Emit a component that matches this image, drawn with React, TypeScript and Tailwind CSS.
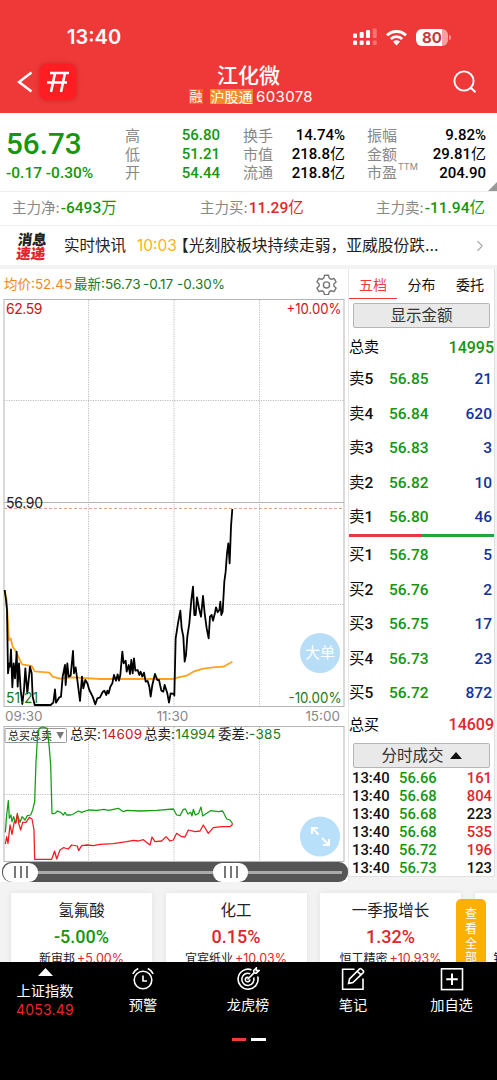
import { type ReactNode } from "react";
import { ChevronRight } from "lucide-react";
import clsx from "clsx";

const DIN = "font-['Roboto','Noto_Sans_CJK_SC',sans-serif] font-medium";
const GREEN = "text-[#16960e]";
const RED = "text-[#e0262b]";

const priceLine =
  "14,270 18,300 21,330 24,520 28,490 30,500 33,448 37,562 41,490 45,535 50,455 53,560 57,490 62,570 67,612 72,570 76,505 82,580 90,500 95,520 98,590 104,615 152,615 160,608 165,568 168,608 178,592 183,590 188,530 195,495 197,555 202,490 206,530 212,527 219,453 222,520 227,502 232,540 240,603 246,530 250,565 256,540 262,550 268,570 278,590 286,613 292,595 300,592 308,576 313,572 319,585 322,572 326,580 331,560 337,550 342,525 348,542 353,523 357,542 361,525 367,455 371,490 377,482 380,515 386,495 390,522 394,480 398,520 402,475 406,512 413,510 418,525 422,515 427,530 432,518 437,545 443,543 448,560 452,590 457,555 465,522 472,540 477,540 484,572 490,575 494,555 502,580 507,608 512,580 522,582 523,587 527,415 534,370 541,332 545,385 550,410 554,485 558,465 562,410 568,370 574,300 579,260 583,345 587,345 591,292 597,325 603,350 609,288 614,340 620,385 626,415 630,350 635,345 639,362 645,338 648,322 653,337 658,330 661,305 664,345 668,335 673,245 677,215 681,160 685,130 689,190 693,80 697,27";
const avgLine =
  "14,272 20,300 27,420 32,415 38,440 45,450 55,470 66,493 95,498 104,514 148,518 158,530 180,536 220,532 300,537 520,537 535,532 560,527 580,515 610,506 640,502 670,500 697,485";
const sellLine =
  "16,352 20,300 25,257 28,310 33,300 36,320 41,305 47,325 52,300 60,322 66,305 75,315 82,302 92,300 98,285 104,260 108,140 113,60 118,40 128,36 142,40 148,100 152,150 156,296 165,295 172,288 182,292 190,300 195,292 200,300 212,300 220,297 235,288 245,292 265,285 290,286 312,283 325,286 355,280 370,290 380,286 420,288 470,286 520,282 530,300 540,302 550,283 556,282 564,297 572,292 576,303 580,283 586,300 596,295 603,276 608,303 620,295 632,287 655,290 668,288 680,312 690,315 698,327";
const buyLine =
  "16,387 20,365 24,385 30,330 36,358 43,320 48,322 52,295 56,325 62,345 68,322 78,322 88,307 96,312 102,345 104,433 155,433 164,408 170,432 180,405 190,398 205,402 215,390 232,393 236,407 245,392 262,390 280,392 300,388 340,386 380,380 400,376 415,378 430,374 450,390 456,366 465,380 485,378 498,365 510,378 520,375 530,355 545,365 555,366 565,345 585,350 600,348 610,330 625,355 640,338 665,335 690,335 698,328";

const sells = [
  ["卖5", "56.85", "21"],
  ["卖4", "56.84", "620"],
  ["卖3", "56.83", "3"],
  ["卖2", "56.82", "10"],
  ["卖1", "56.80", "46"],
];
const buys = [
  ["买1", "56.78", "5"],
  ["买2", "56.76", "2"],
  ["买3", "56.75", "17"],
  ["买4", "56.73", "23"],
  ["买5", "56.72", "872"],
];
const trades = [
  { price: "56.66", qty: "161", up: true },
  { price: "56.68", qty: "804", up: true },
  { price: "56.68", qty: "223", up: false },
  { price: "56.68", qty: "535", up: true },
  { price: "56.72", qty: "196", up: true },
  { price: "56.73", qty: "123", up: false },
];
const sectors = [
  { name: "氢氟酸", pct: "-5.00%", up: false, stock: "新审邦", chg: "+5.00%" },
  { name: "化工", pct: "0.15%", up: true, stock: "宜宾纸业", chg: "+10.03%" },
  { name: "一季报增长", pct: "1.32%", up: true, stock: "恒工精密", chg: "+10.93%" },
];

function Header() {
  return (
    <header className="h-[113px] bg-[#ef3939] text-white">
      <div className="flex h-[58px] items-end justify-between pr-[46px] pb-[10px] pl-[67px]">
        <span className="text-[20px] leading-[22px] font-semibold">13:40</span>
        <div className="flex h-[22px] items-center">
          <svg width="26" height="18" viewBox="0 0 26 18" fill="#fff">
            <rect x="1" y="5.5" width="4" height="4.500" rx="1" />
            <rect x="7.7" y="4" width="4" height="6" rx="1" />
            <rect x="14" y="2" width="4" height="8" rx="1" />
            <rect x="20.7" y="0.5" width="4" height="9.5" rx="1" opacity=".3" />
            <rect x="1" y="12.5" width="4" height="4.5" rx="1.2" />
            <rect x="7.7" y="12.5" width="4" height="4.5" rx="1.2" />
            <rect x="14" y="12.5" width="4" height="4.5" rx="1.2" />
            <rect x="20.7" y="12.5" width="4" height="4.5" rx="1.2" opacity=".3" />
          </svg>
          <svg className="ml-[7px]" width="23" height="17" viewBox="0 0 23 17">
            <path d="M2 6.3a13.5 13.5 0 0 1 19 0" fill="none" stroke="#fff" strokeWidth="3" />
            <path d="M5.8 10a8 8 0 0 1 11.4 0" fill="none" stroke="#fff" strokeWidth="2.8" />
            <path d="M8 12.8a5 5 0 0 1 7 0L11.5 16.5Z" fill="#fff" />
          </svg>
          <div className="ml-[8px] flex h-[17px] w-[32px] items-center justify-center rounded-[6px] bg-[linear-gradient(90deg,#fff_80%,#f7a0a0_80%)] text-[15px] leading-[17px] font-bold text-[#c43a3a]">
            80
          </div>
          <span className="ml-[1px] h-[5px] w-[2px] rounded-r-full bg-[#f7a0a0]" />
        </div>
      </div>
      <div className="flex h-[55px] items-start justify-between">
        <div className="flex w-[150px] items-center pt-[6px] pl-[17px]">
          <svg width="16" height="22" viewBox="0 0 16 22" fill="none" stroke="#fff" strokeWidth="2.6">
            <path d="M14.5 1.5 2 11l12.5 9.5" />
          </svg>
          <span className="ml-[7px] flex h-[36px] w-[36px] items-center justify-center rounded-[7px] bg-[#fd1d22] shadow-[0_0_5px_rgba(150,0,0,.45)]">
            <svg width="26" height="22" viewBox="0 0 26 22" fill="none" stroke="#fff" strokeWidth="2.6">
              <path d="M5 2H24M2 11.5H22M10 2 6 21M20 2 16 21" />
            </svg>
          </span>
        </div>
        <div className="flex flex-col items-center pt-[5px]">
          <span className="text-[21px] leading-[25px] font-medium">江化微</span>
          <div className="mt-[1px] ml-[5px] flex items-center text-[14px] leading-[15px]">
            <span className="w-[14px] bg-[#f9600f] text-center text-[13px]">融</span>
            <span className="ml-[7px] bg-[#f48a2e] px-[.5px]">沪股通</span>
            <span className="ml-[3px] text-[15px] tracking-[.35px]">603078</span>
          </div>
        </div>
        <div className="flex w-[150px] justify-end pt-[12px] pr-[20px]">
          <svg width="24" height="24" viewBox="0 0 24 24" fill="none" stroke="#fff" strokeWidth="1.9">
            <circle cx="11" cy="11" r="9.6" />
            <path d="m17.8 17.8 4.7 4.4" />
          </svg>
        </div>
      </div>
    </header>
  );
}

// the 亿 / 万 unit is drawn lighter than the digits
function Amount({ value }: { value: string }) {
  const unit = value.match(/[亿万]$/)?.[0];
  if (!unit) return <>{value}</>;
  return (
    <>
      {value.slice(0, -1)}
      <span className="font-normal">{unit}</span>
    </>
  );
}

function StatRow({ label, value, className }: { label: ReactNode; value: string; className?: string }) {
  return (
    <div className="flex h-[18.7px] items-center justify-between">
      <span className="text-[15px] whitespace-nowrap text-[#888]">{label}</span>
      <span className={clsx(DIN, "pt-[1px] text-[15px] whitespace-nowrap", className)}>
        <Amount value={value} />
      </span>
    </div>
  );
}

function Quote() {
  return (
    <section className="relative flex h-[79px] border-b border-[#eee] bg-white pt-[13px] leading-none">
      <div className={clsx("w-[125px] pl-[6px]", DIN, GREEN)}>
        <div className="pt-[2px] text-[29.700px] leading-[32px]">56.73</div>
        <div className="mt-[5px] text-[15.500px] leading-[16px] whitespace-nowrap">-0.17 -0.30%</div>
      </div>
      <div className="w-[95px]">
        <StatRow label="高" value="56.80" className={GREEN} />
        <StatRow label="低" value="51.21" className={GREEN} />
        <StatRow label="开" value="54.44" className={GREEN} />
      </div>
      <div className="ml-[23px] w-[102px]">
        <StatRow label="换手" value="14.74%" />
        <StatRow label="市值" value="218.8亿" />
        <StatRow label="流通" value="218.8亿" />
      </div>
      <div className="ml-[22px] w-[119px]">
        <StatRow label="振幅" value="9.82%" />
        <StatRow label="金额" value="29.81亿" />
        <StatRow
          label={
            <span className="flex">
              市盈<span className="-mt-[3px] ml-[1px] text-[9px]">TTM</span>
            </span>
          }
          value="204.90"
        />
      </div>
      <span className="absolute right-0 bottom-0 h-[9px] w-[9px] bg-[#999] [clip-path:polygon(100%_0,100%_100%,0_100%)]" />
    </section>
  );
}

function MainForce({ label, value, className }: { label: string; value: string; className: string }) {
  return (
    <div className="flex items-center">
      <span className="text-[14.5px] text-[#888]">{label}:</span>
      <span className={clsx(DIN, "ml-[1px] text-[15.5px] whitespace-nowrap", className)}>
        <Amount value={value} />
      </span>
    </div>
  );
}

function News() {
  return (
    <section className="flex h-[39px] items-center bg-white pt-[1px] pl-[17px] text-[15.5px] leading-none whitespace-nowrap text-[#222]">
      <div className="w-[47px] -skew-x-6 text-[14.500px] leading-[13.5px] font-black">
        <div className="text-[#222]">消息</div>
        <div className={RED}>速递</div>
      </div>
      <span>实时快讯</span>
      <span className="ml-[11px] w-[36px] text-[15.5px] text-[#fbb414]">10:03</span>
      <span className="text-[15.750px]">【光刻胶板块持续走弱，亚威股份跌...</span>
      <ChevronRight className="mr-[8px] ml-auto h-[18px] w-[18px] shrink-0 text-[#aaa]" strokeWidth={1.5} />
    </section>
  );
}

function Grid({ height, mid }: { height: number; mid: number[] }) {
  return (
    <g fill="none" stroke="#bdbdbd" strokeWidth="1">
      <rect x="4" y=".5" width="340" height={height - 1} stroke="#b5b5b5" />
      <g strokeDasharray="1.2 1.2">
        {[88.5, 174, 259.5].map((x) => (
          <path key={x} d={`M${x} 1V${height - 1}`} />
        ))}
        {mid.map((y) => (
          <path key={y} d={`M4 ${y}H344`} />
        ))}
      </g>
    </g>
  );
}

function PriceChart() {
  return (
    <svg className="block" width="348" height="408" viewBox="0 0 348 408" fontSize="14">
      <Grid height={408} mid={[101.5, 305.5]} />
      <path d="M4 203.5H344" stroke="#b5b5b5" />
      <path d="M4 209.5H344" stroke="#d9a98a" strokeDasharray="3 2" />
      <g transform="translate(0 201) scale(.33333)" fill="none" strokeLinejoin="round">
        <polyline points={avgLine} stroke="#fca31c" strokeWidth="5.4" />
        <polyline points={priceLine} stroke="#000" strokeWidth="5.4" />
      </g>
      <text x="6" y="14.5" fill="#c8161d" textLength="36.5">62.59</text>
      <text x="286.5" y="14.5" fill="#c8161d" textLength="55" lengthAdjust="spacingAndGlyphs">+10.00%</text>
      <text x="6" y="208.5" fill="#222" textLength="37">56.90</text>
      <text x="6" y="404" fill="#197a1b" textLength="32" lengthAdjust="spacingAndGlyphs">51.21</text>
      <text x="288.5" y="404" fill="#197a1b" textLength="53" lengthAdjust="spacingAndGlyphs">-10.00%</text>
      <circle cx="320" cy="354" r="20" fill="#b8ddf7" />
      <text x="320" y="359" fill="#fff" fontSize="15" textAnchor="middle">大单</text>
    </svg>
  );
}

function OrderChart() {
  return (
    <svg className="block" width="348" height="136" viewBox="0 0 348 136" fontSize="13.500">
      <Grid height={136} mid={[68.5]} />
      <rect x="5" y="2.5" width="61.5" height="14" rx="1" fill="#fff" stroke="#999" />
      <text x="8" y="13.5" fill="#222" fontSize="11">总买总卖</text>
      <path d="M56.5 6H64L60.2 13Z" fill="#777" />
      <g transform="translate(0 -11) scale(.33333)" fill="none" strokeLinejoin="round" strokeWidth="3.8">
        <polyline points={sellLine} stroke="#12a012" />
        <polyline points={buyLine} stroke="#f01c22" />
      </g>
      <text x="70" y="13" fill="#222" textLength="31">总买:</text>
      <text x="102" y="13" fill="#c8161d" textLength="40">14609</text>
      <text x="144" y="13" fill="#222" textLength="31">总卖:</text>
      <text x="175.5" y="13" fill="#197a1b" textLength="40">14994</text>
      <text x="218" y="13" fill="#222" textLength="31">委差:</text>
      <text x="249" y="13" fill="#197a1b" textLength="32">-385</text>
      <circle cx="320" cy="110.5" r="20" fill="#b8e0fb" />
      <path
        d="M312 102 318.500 108.500M322 112 329 119M312 108V102H318M323 119H329V113"
        fill="none"
        stroke="#fff"
        strokeWidth="1.9"
      />
    </svg>
  );
}

function Handle() {
  return (
    <span className="flex h-[19px] w-[35px] items-center justify-center gap-[4px] rounded-[9px] bg-white">
      <i className="h-[12px] w-[2px] bg-[#777]" />
      <i className="h-[12px] w-[2px] bg-[#777]" />
      <i className="h-[12px] w-[2px] bg-[#777]" />
    </span>
  );
}

function RangeSlider() {
  return (
    <div className="ml-[2px] flex h-[20px] w-[346px] items-center rounded-[9px] bg-[#555] pr-[6px] pl-[1px]">
      <Handle />
      <span className="h-[3px] w-[175px] bg-[#aaa]" />
      <Handle />
      <span className="h-[3px] flex-1 bg-[#aaa]" />
    </div>
  );
}

function BookRow({ row, className }: { row: string[]; className: string }) {
  const [label, price, qty] = row;
  return (
    <div className={clsx("flex items-center pt-[2px] pr-[2px] leading-none", DIN, className)}>
      <span className="w-[40px] text-[15.5px] whitespace-nowrap text-[#111]">
        <span className="font-normal">{label[0]}</span>
        {label[1]}
      </span>
      <span className="text-[15.5px] text-[#16960e]">{price}</span>
      <span className="ml-auto text-[15.5px] text-[#11349b]">{qty}</span>
    </div>
  );
}

function PanelButton({ children }: { children: ReactNode }) {
  return (
    <div className="mx-[4px] flex h-[25px] items-center justify-center rounded-[2px] border border-[#b5b5b5] bg-[#e9e9e9] text-[15.5px] leading-none text-[#333]">
      {children}
    </div>
  );
}

function OrderBook() {
  return (
    <aside className="h-[608px] w-[146px] border-r border-b border-[#e0e0e0] bg-white">
      <div className="flex h-[30px] text-[14px] leading-[32px] text-[#111]">
        <span className="w-[48px] border-b border-[#ee3b3f] text-center text-[#ee3b3f]">五档</span>
        <span className="w-[49px] text-center">分布</span>
        <span className="w-[48px] text-center">委托</span>
      </div>
      <div className="h-[4px]" />
      <PanelButton>显示金额</PanelButton>
      <div className="mt-[4px] flex h-[30px] items-center justify-between pt-[1px] text-[15px]">
        <span>总卖</span>
        <span className={clsx(DIN, "text-[16px] text-[#16960e]")}>14995</span>
      </div>
      {sells.map((r) => (
        <BookRow key={r[0]} row={r} className="h-[34.4px]" />
      ))}
      <div className="mb-[1px] flex h-[3px]">
        <span className="w-1/2 bg-[#e6383d]" />
        <span className="w-1/2 bg-[#24a43c]" />
      </div>
      {buys.map((r) => (
        <BookRow key={r[0]} row={r} className="h-[34.5px]" />
      ))}
      <div className="mb-[3.5px] flex h-[29px] items-center justify-between pt-[1px] text-[15px]">
        <span>总买</span>
        <span className={clsx(DIN, RED, "text-[16px]")}>14609</span>
      </div>
      <PanelButton>
        分时成交
        <svg className="ml-[6px]" width="12" height="7" viewBox="0 0 12 7">
          <path d="M6 0 12 7H0Z" fill="#111" />
        </svg>
      </PanelButton>
      <div className="pt-[1px]">
        {trades.map((t, i) => (
          <div key={i} className={clsx("flex h-[18px] items-center pr-[2px] pl-[3px] text-[14.800px] leading-none", DIN)}>
            <span className="w-[47px] text-[#111]">13:40</span>
            <span className="text-[#16960e]">{t.price}</span>
            <span className={clsx("ml-auto", t.up ? RED : "text-[#111]")}>{t.qty}</span>
          </div>
        ))}
      </div>
    </aside>
  );
}

function ChartPanel() {
  return (
    <div className="w-[349px] border-r border-[#e8e8e8] bg-white">
      <div className="flex h-[30px] items-center pt-[2px] pl-[4px] text-[13.500px] leading-none whitespace-nowrap">
        <span className="w-[70px] text-[#f5861f]">均价:52.45</span>
        <span className="w-[69px] text-[#197a1b]">最新:56.73</span>
        <span className="w-[34px] text-[#197a1b]">-0.17</span>
        <span className="text-[#197a1b]">-0.30%</span>
        <svg className="mr-[11px] mb-[2px] ml-auto" width="21" height="21" viewBox="0 0 24 24" fill="none" stroke="#777" strokeWidth="1.6" strokeLinejoin="round">
          <path d="M9.700 1.500h4.600l.8 3.300 2.200 1.300 3.300-1 2.300 4-2.500 2.300v2.400l2.500 2.300-2.300 4-3.300-1-2.200 1.300-.8 3.300H9.700l-.8-3.300-2.200-1.300-3.300 1-2.300-4 2.500-2.300v-2.400L1.100 9.100l2.300-4 3.300 1 2.200-1.300Z" />
          <circle cx="12" cy="12.500" r="3.500" />
        </svg>
      </div>
      <PriceChart />
      <div className="grid h-[19px] grid-cols-[1fr_auto_1fr] items-center pr-[8px] pl-[5px] text-[13.500px] leading-none text-[#888]">
        <span>09:30</span>
        <span>11:30</span>
        <span className="text-right">15:00</span>
      </div>
      <OrderChart />
      <RangeSlider />
    </div>
  );
}

function Sectors() {
  return (
    <section className="relative flex h-[80px] shrink-0 gap-[13.5px] overflow-hidden bg-[#f3f3f4] pt-[11px] pl-[11px] leading-none">
      {sectors.map((s) => (
        <div key={s.name} className="flex h-[100px] w-[141px] shrink-0 flex-col items-center bg-white shadow-[0_0_6px_rgba(0,0,0,.08)]">
          <span className="mt-[10px] text-[15.500px] text-[#222]">{s.name}</span>
          <span className={clsx(DIN, "mt-[9px] text-[18px]", s.up ? RED : GREEN)}>{s.pct}</span>
          <span className="mt-[7px] flex items-center whitespace-nowrap text-[#222]">
            <span className="text-[12px]">{s.stock}</span>
            <span className={clsx("ml-[2px] text-[12.500px]", RED)}>{s.chg}</span>
          </span>
        </div>
      ))}
      <div className="h-[100px] w-[141px] shrink-0 bg-white pt-[60px] pl-[19px] text-[12px] shadow-[0_0_6px_rgba(0,0,0,.08)]">锦</div>
      <div className="absolute top-[17px] right-[11px] flex h-[80px] w-[30px] flex-col items-center rounded-[5px] bg-[#fbb003] pt-[8px] text-[12px] leading-[14.800px] text-white">
        <span>查</span>
        <span>看</span>
        <span>全</span>
        <span>部</span>
      </div>
    </section>
  );
}

function NavItem({ label, className, children }: { label: string; className: string; children: ReactNode }) {
  return (
    <div className={clsx("flex flex-col items-center", className)}>
      <svg className="mt-[5px]" width="24" height="24" viewBox="0 0 24 24" fill="none" stroke="#fff" strokeWidth="1.600">
        {children}
      </svg>
      <span className="mt-[7px] text-[14.200px] leading-[14px]">{label}</span>
    </div>
  );
}

function BottomNav() {
  return (
    <nav className="h-[118px] bg-black text-white">
      <div className="flex h-[76px]">
        <div className="flex w-[90px] flex-col items-center leading-none">
          <svg className="mt-[6px]" width="15" height="8" viewBox="0 0 15 8">
            <path d="M7.500 0 15 8H0Z" fill="#fff" />
          </svg>
          <span className="mt-[8px] text-[14.200px]">上证指数</span>
          <span className="mt-[5px] text-[14px] tracking-[.2px] text-[#e8262b]">4053.49</span>
        </div>
        <NavItem label="预警" className="w-[106px]">
          <circle cx="12" cy="13" r="8.800" />
          <path d="M12 8.500V14H16M1.800 6.800Q3.500 3.200 7.200 1.500M22.200 6.800Q20.500 3.200 16.800 1.500" />
        </NavItem>
        <NavItem label="龙虎榜" className="w-[104px]">
          <path d="M15.500 2.800A10 10 0 1 0 21.700 9.500" />
          <path d="M14.200 6.700A6.100 6.100 0 1 0 17.700 10.500" />
          <path d="M12.500 10.400A2.300 2.300 0 1 0 13.900 12.300" />
          <path d="M11.500 12.500 18 5.900M18 5.900 17.700 3.500 20.300 1V3.600H23L20.400 6.200Z" />
        </NavItem>
        <NavItem label="笔记" className="w-[106px]">
          <path d="M13.500 2.300H1.600V22.300H22V11.500" />
          <path d="M7.600 16.400 8.500 12 18.600 1.900Q19.500 1.200 20.400 2L22.300 3.800Q23 4.700 22.200 5.600L12 15.600ZM16.300 4.200 20 7.900" />
        </NavItem>
        <NavItem label="加自选" className="w-[91px]">
          <rect x="1.500" y="1.800" width="21" height="20.800" />
          <path d="M12 6.500V18M6.200 12.200H17.800" strokeWidth="2" />
        </NavItem>
      </div>
      <div className="flex justify-center gap-[5px]">
        <span className="h-[3px] w-[14px] bg-[#f03a3c]" />
        <span className="h-[3px] w-[15px] bg-white" />
      </div>
    </nav>
  );
}

export default function App() {
  return (
    <div className="flex h-[1080px] w-[497px] flex-col overflow-hidden bg-[#f3f3f4] font-['Inter','Noto_Sans_CJK_SC',sans-serif] text-black">
      <Header />
      <Quote />
      <section className="grid h-[34px] grid-cols-[188px_1fr_auto] items-center border-b border-[#eee] bg-white pr-[12px] pl-[12px] leading-none">
        <MainForce label="主力净" value="-6493万" className={GREEN} />
        <MainForce label="主力买" value="11.29亿" className={RED} />
        <MainForce label="主力卖" value="-11.94亿" className={GREEN} />
      </section>
      <News />
      <main className="mt-[4px] flex h-[613px] shrink-0 items-start">
        <ChartPanel />
        <OrderBook />
      </main>
      <Sectors />
      <BottomNav />
    </div>
  );
}
